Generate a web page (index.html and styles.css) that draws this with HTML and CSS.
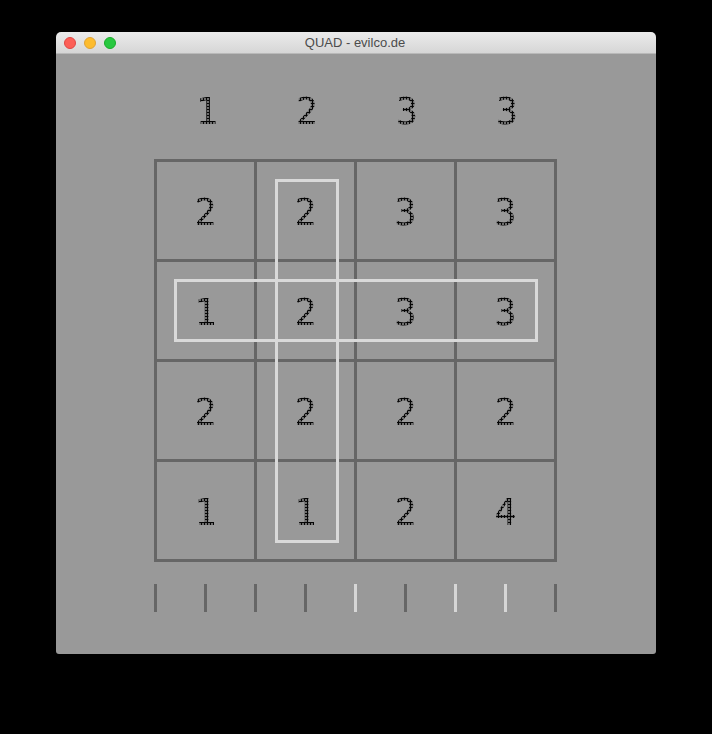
FILE: index.html
```html
<!DOCTYPE html>
<html>
<head>
<meta charset="utf-8">
<title>QUAD - evilco.de</title>
<link rel="stylesheet" href="styles.css">
</head>
<body>
<div class="window">
  <div class="titlebar">
    <div class="lights">
      <span class="light red"></span>
      <span class="light yellow"></span>
      <span class="light green"></span>
    </div>
    <div class="title">QUAD - evilco.de</div>
  </div>
  <div class="content">
    <div class="header">
      <div class="num"><span class="digit">1</span></div>
      <div class="num"><span class="digit">2</span></div>
      <div class="num"><span class="digit">3</span></div>
      <div class="num"><span class="digit">3</span></div>
    </div>
    <div class="board">
      <div class="cell"><span class="digit">2</span></div>
      <div class="cell"><span class="digit">2</span></div>
      <div class="cell"><span class="digit">3</span></div>
      <div class="cell"><span class="digit">3</span></div>
      <div class="cell"><span class="digit">1</span></div>
      <div class="cell"><span class="digit">2</span></div>
      <div class="cell"><span class="digit">3</span></div>
      <div class="cell"><span class="digit">3</span></div>
      <div class="cell"><span class="digit">2</span></div>
      <div class="cell"><span class="digit">2</span></div>
      <div class="cell"><span class="digit">2</span></div>
      <div class="cell"><span class="digit">2</span></div>
      <div class="cell"><span class="digit">1</span></div>
      <div class="cell"><span class="digit">1</span></div>
      <div class="cell"><span class="digit">2</span></div>
      <div class="cell"><span class="digit">4</span></div>
      <div class="hl hl-col"></div>
      <div class="hl hl-row"></div>
    </div>
    <div class="ticks">
      <span class="tick"></span>
      <span class="tick"></span>
      <span class="tick"></span>
      <span class="tick"></span>
      <span class="tick on"></span>
      <span class="tick"></span>
      <span class="tick on"></span>
      <span class="tick on"></span>
      <span class="tick"></span>
    </div>
  </div>
</div>
</body>
</html>
```

FILE: styles.css
```css
html, body {
  margin: 0;
  padding: 0;
  background: #000;
}
body {
  width: 712px;
  height: 734px;
  overflow: hidden;
  font-family: "Liberation Sans", Arial, sans-serif;
}
.window {
  margin: 32px 0 0 56px;
  width: 600px;
  border-radius: 5px 5px 3px 3px;
  overflow: hidden;
}
.titlebar {
  position: relative;
  height: 22px;
  background: linear-gradient(#ebebeb, #d6d6d6);
  border-bottom: 1px solid #b9b9b9;
  box-sizing: border-box;
  display: flex;
  align-items: center;
  justify-content: center;
}
.lights {
  position: absolute;
  left: 8px;
  top: 5px;
  display: flex;
  gap: 8px;
}
.light {
  width: 12px;
  height: 12px;
  border-radius: 50%;
  box-sizing: border-box;
}
.red { background: #fc5f57; border: 1px solid #df4744; }
.yellow { background: #fdbc2e; border: 1px solid #dea236; }
.green { background: #28c840; border: 1px solid #1aab29; }
.title {
  font-size: 13px;
  color: #4c4c4c;
  line-height: 22px;
  margin-left: -2px;
}
.content {
  height: 600px;
  background: #999999;
  padding-left: 98px;
  box-sizing: border-box;
}
.header {
  display: flex;
  padding: 10px 0 0 3px;
  box-sizing: border-box;
  height: 105px;
}
.num {
  width: 100px;
  height: 95px;
  display: flex;
  align-items: center;
  justify-content: center;
}
.digit {
  font-family: "DejaVu Sans Mono", monospace;
  font-size: 37px;
  line-height: 1;
  color: transparent;
  background-image: radial-gradient(circle, #050505 1.2px, transparent 1.5px);
  background-size: 3px 3px;
  -webkit-background-clip: text;
  background-clip: text;
}
.board {
  position: relative;
  display: grid;
  grid-template-columns: repeat(4, 97px);
  grid-template-rows: repeat(4, 97px);
  gap: 3px;
  padding: 3px;
  width: 403px;
  box-sizing: border-box;
  background: #666666;
}
.cell {
  background: #999999;
  display: flex;
  align-items: center;
  justify-content: center;
  padding-top: 4px;
  box-sizing: border-box;
}
.hl {
  position: absolute;
  border: 3px solid #d9d9d9;
  box-sizing: border-box;
}
.hl-col {
  left: 121px;
  top: 20px;
  width: 64px;
  height: 364px;
}
.hl-row {
  left: 20px;
  top: 120px;
  width: 364px;
  height: 63px;
}
.ticks {
  display: flex;
  gap: 47px;
  margin-top: 22px;
}
.tick {
  width: 3px;
  height: 28px;
  background: #666666;
}
.tick.on {
  background: #d6d6d6;
}
```
